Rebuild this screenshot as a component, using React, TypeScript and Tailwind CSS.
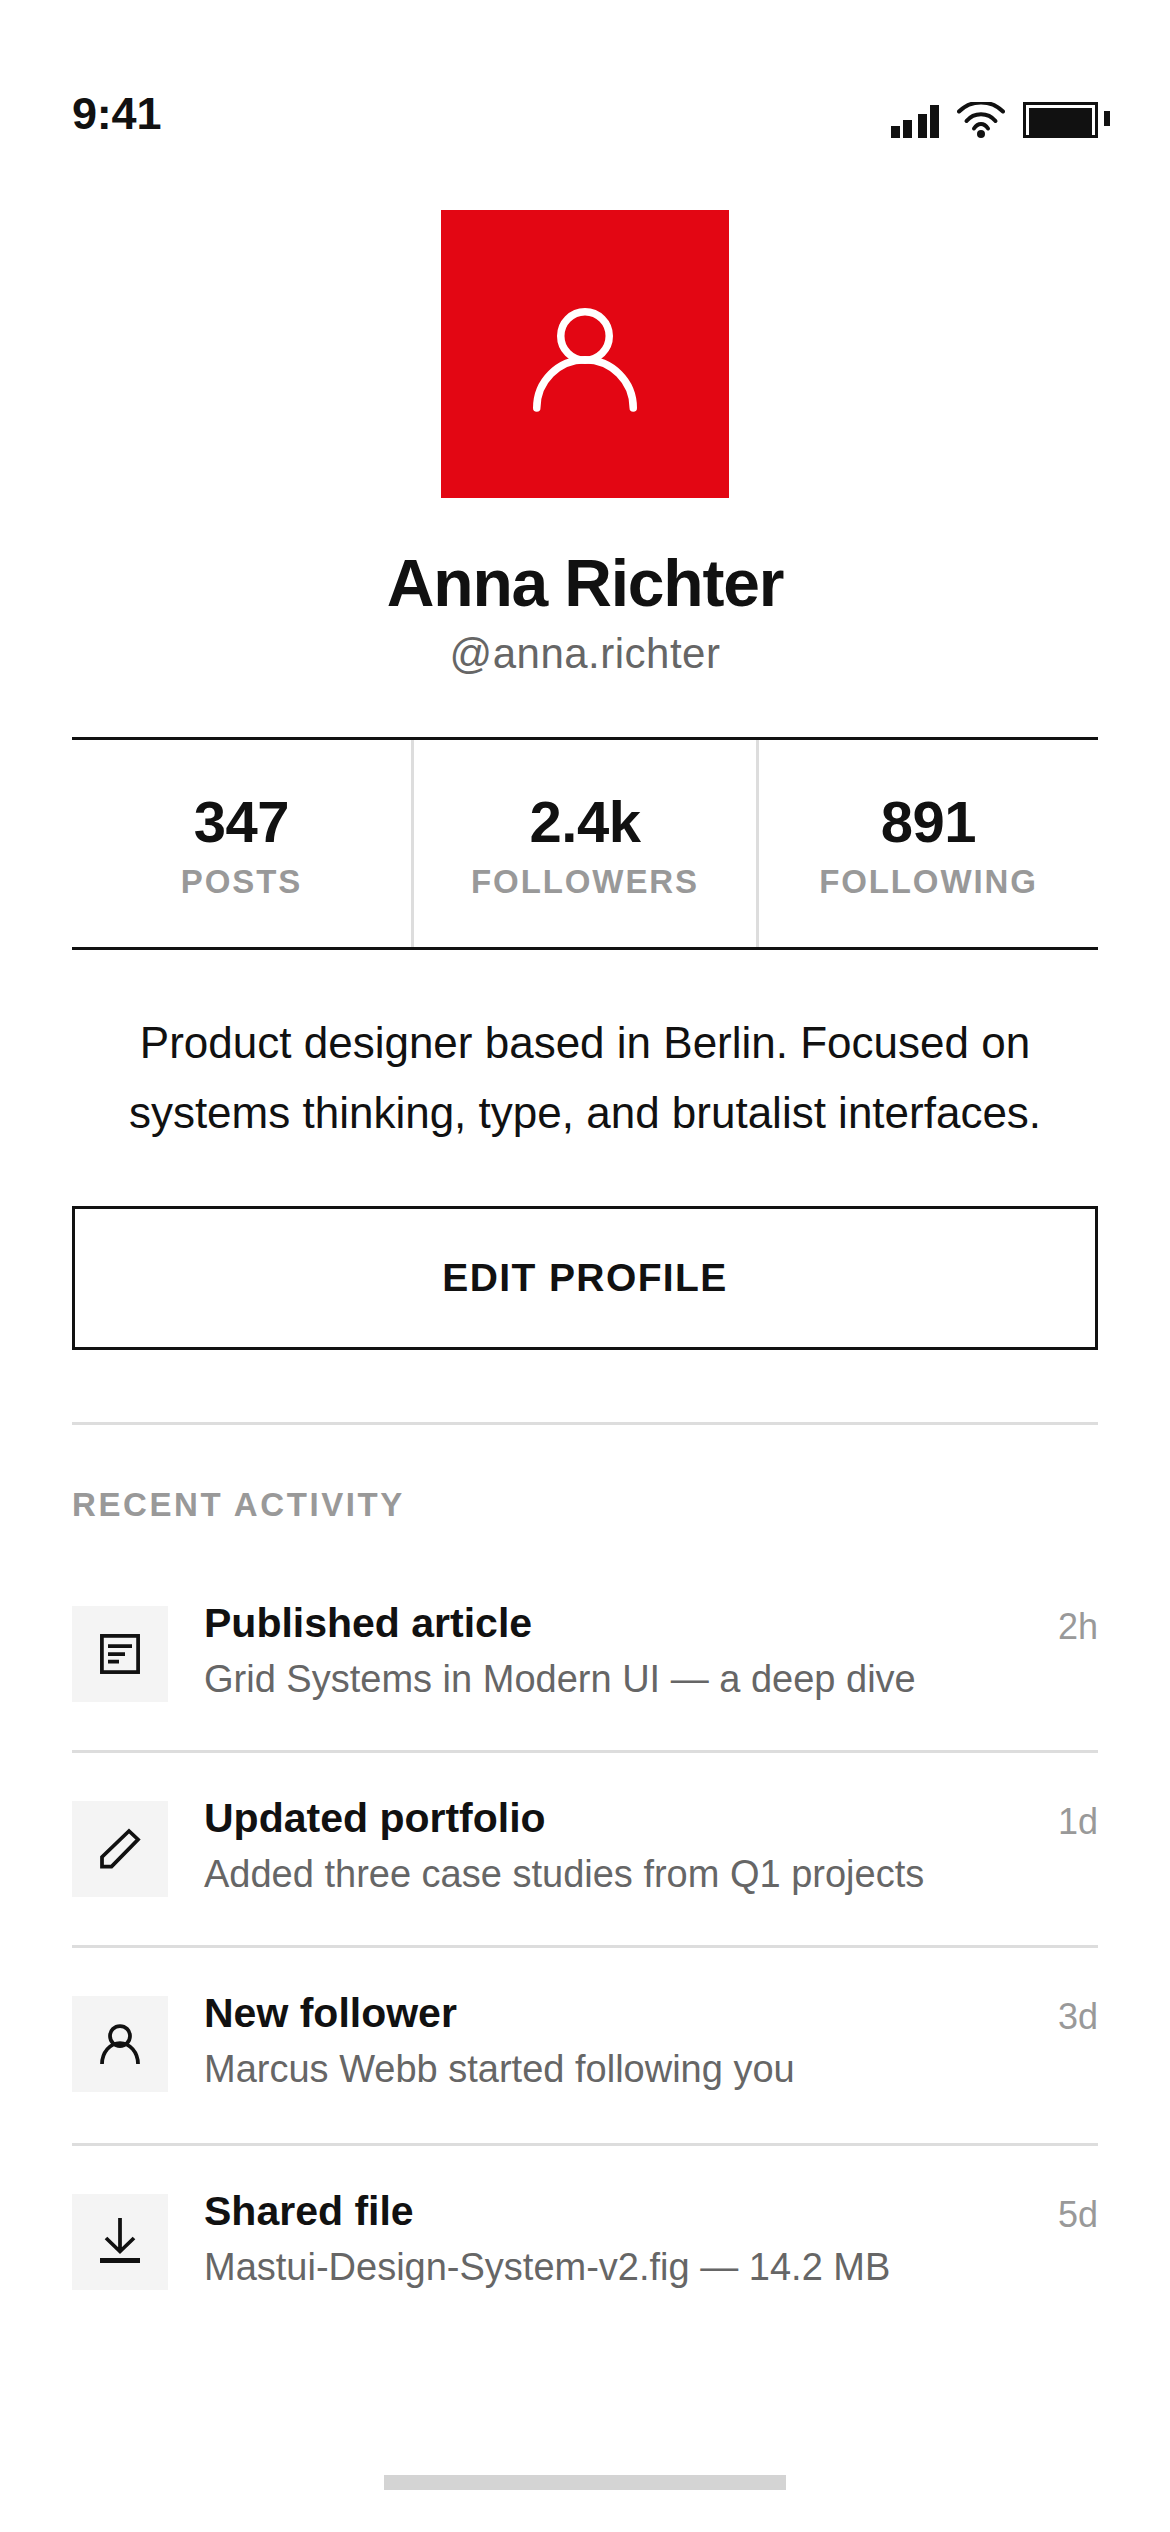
import React from 'react';

const activity = [
  { icon: 'doc', title: 'Published article', sub: 'Grid Systems in Modern UI — a deep dive', time: '2h' },
  { icon: 'pen', title: 'Updated portfolio', sub: 'Added three case studies from Q1 projects', time: '1d' },
  { icon: 'user', title: 'New follower', sub: 'Marcus Webb started following you', time: '3d' },
  { icon: 'down', title: 'Shared file', sub: 'Mastui-Design-System-v2.fig — 14.2 MB', time: '5d' },
];

const stats = [
  { value: '347', label: 'POSTS' },
  { value: '2.4k', label: 'FOLLOWERS' },
  { value: '891', label: 'FOLLOWING' },
];

const RowIcon = ({ name }: { name: string }) => {
  if (name === 'doc') {
    return (
      <svg width="42" height="42" viewBox="0 0 42 42" fill="none" stroke="#111111" strokeWidth="3.75">
        <rect x="2.9" y="2.9" width="36.2" height="36.2" />
        <path d="M9 13H33M9 21H26M9 28.5H20" />
      </svg>
    );
  }
  if (name === 'pen') {
    return (
      <svg width="42" height="42" viewBox="0 0 42 42" fill="none" stroke="#111111" strokeWidth="3.75">
        <path d="M30 3L39 11.5L12.5 38.5H3V29Z" />
      </svg>
    );
  }
  if (name === 'user') {
    return (
      <svg width="42" height="42" viewBox="0 0 42 42" fill="none" stroke="#111111" strokeWidth="3.75">
        <circle cx="21" cy="13" r="10" />
        <path d="M3 41A18 21 0 0 1 39 41" />
      </svg>
    );
  }
  return (
    <svg width="42" height="46" viewBox="0 0 42 46" fill="none" stroke="#111111" strokeWidth="3.75" className="mb-[3px]">
      <path d="M21 0V33M7 20L21 33.5L35 20" />
      <path d="M1 42.5H41" strokeWidth="5" />
    </svg>
  );
};

export default function App() {
  return (
    <div className="w-[1170px] h-[2532px] bg-white flex flex-col font-['Liberation_Sans',Arial,sans-serif] text-[#111111]">
      {/* status bar */}
      <div className="h-[210px] pl-[72px] pr-[60px] flex items-start justify-between shrink-0">
        <span className="mt-[88px] text-[45px] leading-[52px] font-bold tracking-[-0.2px]">9:41</span>
        <div className="mt-[102px] flex items-end">
          <svg width="48" height="33" viewBox="0 0 48 33" fill="#111111">
            <rect x="0" y="21" width="9" height="12" />
            <rect x="12" y="15" width="9" height="18" />
            <rect x="27" y="9" width="9" height="24" />
            <rect x="39" y="0" width="9" height="33" />
          </svg>
          <svg width="48" height="36" viewBox="0 0 48 36" fill="none" stroke="#111111" strokeWidth="4" strokeLinecap="round" className="ml-[18px]">
            <path d="M2 9.5C14 -2.5 34 -2.5 46 9.5" />
            <path d="M9.5 19C17 10 31 10 38.5 19" />
            <path d="M17 26.5C21 20.5 27 20.5 31 26.5" />
            <circle cx="24" cy="32" r="4" fill="#111111" stroke="none" />
          </svg>
          <div className="ml-[18px] w-[75px] h-[36px] border-[3px] border-[#111111] pt-[3px] px-[3px]">
            <div className="w-full h-full bg-[#111111]" />
          </div>
          <div className="ml-[6px] mb-[12px] w-[6px] h-[15px] bg-[#111111]" />
        </div>
      </div>

      {/* profile */}
      <div className="px-[72px] flex flex-col">
        <div className="flex flex-col items-center">
          <div className="w-[288px] h-[288px] bg-[#e30613] flex items-center justify-center">
            <svg width="104" height="104" viewBox="0 0 104 104" fill="none" stroke="#ffffff" strokeWidth="7.5" strokeLinecap="round" className="mt-[12px]">
              <circle cx="52" cy="28" r="24.25" />
              <path d="M3.75 100A48.25 48.25 0 0 1 100.25 100" />
            </svg>
          </div>
          <h1 className="mt-[45px] text-[66px] leading-[80px] font-bold tracking-[-1.2px]">Anna Richter</h1>
          <p className="mt-[3px] text-[42px] leading-[56px] tracking-[0.5px] text-[#666666]">@anna.richter</p>
        </div>

        <div className="mt-[55px] h-[213px] border-y-[3px] border-[#111111] grid grid-cols-[342px_345px_339px]">
          {stats.map((s, i) => (
            <div key={s.label} className={`flex flex-col items-center pt-[48px] ${i < 2 ? 'border-r-[3px] border-[#dddddd]' : ''}`}>
              <span className="text-[58px] leading-[68px] font-bold tracking-[-0.5px]">{s.value}</span>
              <span className="mt-[7px] text-[33px] leading-[38px] font-bold tracking-[1.9px] text-[#999999]">{s.label}</span>
            </div>
          ))}
        </div>

        <p className="mt-[58px] text-center text-[44px] leading-[70px]">
          Product designer based in Berlin. Focused on
          <br />
          systems thinking, type, and brutalist interfaces.
        </p>

        <button className="mt-[58px] h-[144px] w-full border-[3px] border-[#111111] text-[39px] font-bold tracking-[1.4px]">
          EDIT PROFILE
        </button>

        <div className="mt-[72px] h-[3px] bg-[#dddddd]" />

        <h2 className="mt-[60px] text-[33px] leading-[40px] font-bold tracking-[2.6px] text-[#999999]">RECENT ACTIVITY</h2>

        <div className="mt-[81px] flex flex-col">
          {activity.map((a, i) => (
            <div
              key={a.title}
              className={`flex items-start ${i === 2 ? 'pb-[51px]' : 'pb-[48px]'} ${i < 3 ? 'border-b-[3px] border-[#dddddd] mb-[48px]' : ''}`}
            >
              <div className="w-[96px] h-[96px] bg-[#f4f4f4] flex items-center justify-center shrink-0">
                <RowIcon name={a.icon} />
              </div>
              <div className="ml-[36px] flex-1 flex flex-col">
                <span className="text-[41px] leading-[34px] font-bold">{a.title}</span>
                <span className="mt-[22px] text-[38px] leading-[34px] text-[#666666]">{a.sub}</span>
              </div>
              <span className="text-[36px] leading-[42px] text-[#999999]">{a.time}</span>
            </div>
          ))}
        </div>
      </div>

      {/* home indicator */}
      <div className="mt-auto mb-[42px] mx-auto w-[402px] h-[15px] bg-[#d4d4d4]" />
    </div>
  );
}
